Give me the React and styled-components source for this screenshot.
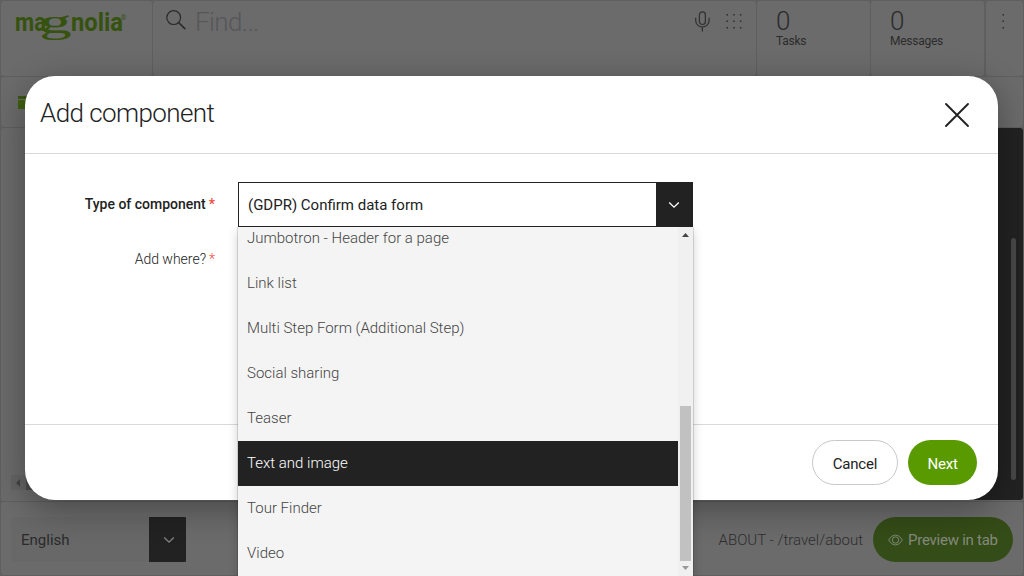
import React from 'react';
import styled, { createGlobalStyle, css } from 'styled-components';

const GlobalStyle = createGlobalStyle`
  *, *::before, *::after { box-sizing: border-box; }
  html, body { margin: 0; padding: 0; overflow: hidden; }
  body { font-family: Roboto, "Liberation Sans", sans-serif; color: #222; background: #5f5f5f; }
  button { font: inherit; margin: 0; padding: 0; border: 0; background: none; color: inherit; }
`;

const Page = styled.div`
  position: relative;
  width: 1024px;
  height: 576px;
  overflow: hidden;
  background: #5f5f5f;
`;

const Shell = styled.div`
  display: flex;
  flex-direction: column;
  gap: 1px;
  height: 100%;
  padding: 1px;
`;

const tile = css`
  background: #6b6b6b;
  border-radius: 3px;
`;

const TopBar = styled.header`
  display: flex;
  gap: 1px;
  height: 75px;
`;

const LogoTile = styled.div`
  ${tile}
  width: 151px;
  padding: 9px 0 0 14px;
  svg { display: block; overflow: visible; }
`;

const SearchTile = styled.div`
  ${tile}
  flex: 1;
  display: flex;
  align-items: flex-start;
  padding: 8px 9px 0 13px;
`;

const SearchText = styled.span`
  flex: 1;
  margin: -2px 0 0 8px;
  font-size: 26px;
  line-height: 30px;
  font-weight: 300;
  letter-spacing: -0.6px;
  color: #555759;
`;

const SearchTools = styled.div`
  display: flex;
  gap: 15px;
  padding-top: 2px;
  svg + svg { margin-top: 2px; }
`;

const CounterTile = styled.div`
  ${tile}
  width: 113px;
  padding: 6px 0 0 19px;
`;

const CounterValue = styled.div`
  font-size: 26px;
  line-height: 28px;
  font-weight: 300;
  color: #2b2b2b;
`;

const CounterLabel = styled.div`
  margin-top: -1px;
  font-size: 12px;
  line-height: 14px;
  color: #2b2b2b;
  letter-spacing: -0.25px;
`;

const MenuTile = styled.div`
  ${tile}
  width: 37px;
  margin-left: 1px;
  padding: 12px 0 0 16px;
`;

const AppBar = styled.div`
  ${tile}
  height: 50px;
  padding: 19px 0 0 17px;
`;

const AppMark = styled.div`
  width: 14px;
  height: 13px;
  background: linear-gradient(#3b5511 0 3px, #6b6b6b 3px 4px, #3f6110 4px);
`;

const Workspace = styled.main`
  ${tile}
  display: flex;
  justify-content: space-between;
  height: 373px;
`;

const PageScroller = styled.div`
  align-self: flex-end;
  display: flex;
  align-items: center;
  width: 400px;
  height: 15px;
  margin: 0 0 11px 10px;
  padding-left: 5px;
  background: linear-gradient(90deg, #646464 15px, #4c4c4c 15px);
`;

const SidePanel = styled.aside`
  display: flex;
  justify-content: flex-end;
  align-items: flex-end;
  width: 80px;
  height: 372px;
  padding: 0 7px 20px 0;
  background: #222;
  border-radius: 3px;
`;

const SideThumb = styled.div`
  width: 5px;
  height: 242px;
  border-radius: 3px;
  background: #484848;
`;

const StatusBar = styled.footer`
  ${tile}
  display: flex;
  align-items: flex-start;
  flex: 1;
  padding: 15px 10px 0;
`;

const LanguageSelect = styled.div`
  display: flex;
  width: 175px;
  height: 45px;
  background: #686868;
`;

const LanguageName = styled.span`
  flex: 1;
  padding-left: 10px;
  font-size: 15px;
  line-height: 46px;
  color: #2b2b2b;
`;

const LanguageArrow = styled.span`
  display: flex;
  align-items: center;
  justify-content: center;
  width: 37px;
  padding: 1px 0 0 3px;
  background: #222;
  border-radius: 0 1px 1px 0;
`;

const PagePath = styled.span`
  margin: 0 10px 0 auto;
  font-size: 15px;
  line-height: 46px;
  font-weight: 300;
  color: #2e2e2e;
`;

const PreviewButton = styled.button`
  display: flex;
  align-items: center;
  gap: 5px;
  width: 140px;
  height: 45px;
  padding-left: 15px;
  border-radius: 23px;
  background: #344c17;
  font-size: 15px;
  letter-spacing: -0.25px;
  color: #848a7d;
  white-space: nowrap;
`;

const Dialog = styled.section`
  position: absolute;
  left: 25px;
  top: 76px;
  display: flex;
  flex-direction: column;
  width: 973px;
  height: 424px;
  border-radius: 30px;
  background: #fff;
  box-shadow: 0 9px 34px rgba(0, 0, 0, 0.33);
`;

const DialogHeader = styled.div`
  display: flex;
  justify-content: space-between;
  height: 78px;
  padding: 21px 28px 0 15px;
  border-bottom: 1px solid #d9d9d9;
`;

const DialogTitle = styled.h1`
  margin: 0;
  font-size: 26px;
  line-height: 32px;
  font-weight: 300;
  letter-spacing: -0.58px;
`;

const CloseButton = styled.button`
  width: 26px;
  height: 26px;
  margin-top: 5px;
  svg { display: block; }
`;

const DialogBody = styled.div`
  display: flex;
  flex-direction: column;
  gap: 10px;
  height: 270px;
  padding-top: 28px;
`;

const FieldRow = styled.div`
  display: flex;
  gap: 23px;
  height: 45px;
`;

const FieldLabel = styled.label`
  width: 190px;
  font-size: 14px;
  line-height: 44px;
  font-weight: ${(p) => (p.$active ? 500 : 300)};
  text-align: right;
`;

const Required = styled.span`
  margin-left: 3px;
  font-weight: inherit;
  color: #f0483e;
`;

const Select = styled.div`
  position: relative;
  display: flex;
  width: 455px;
  height: 45px;
  border: 1px solid #222;
`;

const SelectValue = styled.span`
  flex: 1;
  padding-left: 9px;
  font-size: 15px;
  line-height: 44px;
`;

const SelectArrow = styled.span`
  display: flex;
  align-items: center;
  justify-content: center;
  width: 36px;
  padding-top: 1px;
  background: #222;
`;

const Menu = styled.div`
  position: absolute;
  top: 44px;
  left: -1px;
  display: flex;
  width: 455px;
  height: 352px;
  background: #f4f4f4;
  box-shadow: 0 0 0 1px rgba(0, 0, 0, 0.12), 0 4px 10px rgba(0, 0, 0, 0.2);
  clip-path: inset(0 -20px -20px -20px);
`;

const MenuItems = styled.div`
  flex: 1;
  height: 349px;
  overflow: hidden;
`;

const MenuItem = styled.div`
  height: 45px;
  padding-left: 9px;
  font-size: 15px;
  line-height: 44px;
  font-weight: 300;
  color: ${(p) => (p.$selected ? '#fff' : '#444')};
  background: ${(p) => (p.$selected ? '#222' : 'transparent')};
  &:first-child { margin-top: -11px; }
`;

const MenuScroll = styled.div`
  display: flex;
  flex-direction: column;
  align-items: center;
  justify-content: space-between;
  width: 15px;
  height: 349px;
  padding: 6px 0 6px;
  background: #f0f0f0;
  svg { display: block; flex: none; }
`;

const MenuThumb = styled.div`
  width: 11px;
  height: 155px;
  margin: auto 0 5px;
  background: #c1c1c1;
`;

const DialogFooter = styled.div`
  display: flex;
  justify-content: flex-end;
  gap: 10px;
  flex: 1;
  padding: 15px 21px 0;
  border-top: 1px solid #d9d9d9;
`;

const ActionButton = styled.button`
  height: 45px;
  width: ${(p) => (p.$primary ? '69px' : '86px')};
  padding-top: 2px;
  border: ${(p) => (p.$primary ? '0' : '1px solid #c8c8c8')};
  border-radius: 23px;
  background: ${(p) => (p.$primary ? '#589a00' : '#fff')};
  color: ${(p) => (p.$primary ? '#fff' : '#222')};
  font-size: 15px;
  letter-spacing: -0.2px;
`;

const Logo = () => (
  <svg width="116" height="42" fill="#35520e" fontFamily="Roboto, sans-serif" fontWeight="700">
    <text x="0" y="21" fontSize="26" textLength="31" lengthAdjust="spacingAndGlyphs">ma</text>
    <text
      transform="translate(24.5 22.8) scale(1.88 1)"
      fontSize="34"
      fontWeight="400"
      fontFamily="Liberation Serif, serif"
      stroke="#35520e"
      strokeWidth="0.2"
    >g</text>
    <text x="56" y="21" fontSize="25.5" textLength="52" lengthAdjust="spacingAndGlyphs">nolia</text>
    <text x="106" y="10" fontSize="6.5" fontWeight="500">®</text>
  </svg>
);

const SearchIcon = () => (
  <svg width="21" height="21" fill="none" stroke="#2b2b2b" strokeWidth="1.2">
    <circle cx="7.7" cy="8.6" r="6.9" />
    <path d="M12.7 13.6L19.3 20.1" strokeWidth="1.6" />
  </svg>
);

const MicIcon = () => (
  <svg width="16" height="21" fill="none" stroke="#2f2f2f" strokeWidth="1.2">
    <rect x="4.4" y="0.9" width="6" height="12.6" rx="3" />
    <path d="M.7 6.8V9.6a6.7 6.4 0 0 0 13.4 0V6.8M7.4 16.1V20.5" />
  </svg>
);

const Dots = ({ columns }) => (
  <svg width={columns * 7} height="18" fill="#2e2e2e">
    {Array.from({ length: columns * 3 }, (_, i) => (
      <rect key={i} x={(i % columns) * 6.7 + 0.5} y={Math.floor(i / columns) * 6.5 + 1} width="1.5" height="1.5" />
    ))}
  </svg>
);

const Chevron = ({ color }) => (
  <svg width="12" height="8" fill="none" stroke={color} strokeWidth="1.3">
    <path d="M1.2 1.5L6 6.1L10.8 1.5" />
  </svg>
);

const EyeIcon = () => (
  <svg width="15" height="12" fill="none" stroke="#7d8775" strokeWidth="1">
    <path d="M.6 6Q3.2 1 7.5 1T14.4 6Q11.8 11 7.5 11T.6 6Z" />
    <circle cx="7.5" cy="6" r="3.2" />
  </svg>
);

const options = [
  'Jumbotron - Header for a page',
  'Link list',
  'Multi Step Form (Additional Step)',
  'Social sharing',
  'Teaser',
  'Text and image',
  'Tour Finder',
  'Video',
];

export default function App() {
  return (
    <Page>
      <GlobalStyle />
      <Shell>
        <TopBar>
          <LogoTile><Logo /></LogoTile>
          <SearchTile>
            <SearchIcon />
            <SearchText>Find...</SearchText>
            <SearchTools>
              <MicIcon />
              <Dots columns={3} />
            </SearchTools>
          </SearchTile>
          <CounterTile>
            <CounterValue>0</CounterValue>
            <CounterLabel>Tasks</CounterLabel>
          </CounterTile>
          <CounterTile>
            <CounterValue>0</CounterValue>
            <CounterLabel>Messages</CounterLabel>
          </CounterTile>
          <MenuTile><Dots columns={1} /></MenuTile>
        </TopBar>
        <AppBar><AppMark /></AppBar>
        <Workspace>
          <PageScroller>
            <svg width="4" height="8" fill="#444"><path d="M0 4L4 0V8Z" /></svg>
          </PageScroller>
          <SidePanel><SideThumb /></SidePanel>
        </Workspace>
        <StatusBar>
          <LanguageSelect>
            <LanguageName>English</LanguageName>
            <LanguageArrow><Chevron color="#858585" /></LanguageArrow>
          </LanguageSelect>
          <PagePath>ABOUT - /travel/about</PagePath>
          <PreviewButton><EyeIcon />Preview in tab</PreviewButton>
        </StatusBar>
      </Shell>
      <Dialog>
        <DialogHeader>
          <DialogTitle>Add component</DialogTitle>
          <CloseButton aria-label="Close">
            <svg width="26" height="26" stroke="#222" strokeWidth="1.9">
              <path d="M2 2L24 24M24 2L2 24" strokeLinecap="round" />
            </svg>
          </CloseButton>
        </DialogHeader>
        <DialogBody>
          <FieldRow>
            <FieldLabel $active>Type of component<Required>*</Required></FieldLabel>
            <Select>
              <SelectValue>(GDPR) Confirm data form</SelectValue>
              <SelectArrow><Chevron color="#fff" /></SelectArrow>
              <Menu>
                <MenuItems>
                  {options.map((name) => (
                    <MenuItem key={name} $selected={name === 'Text and image'}>{name}</MenuItem>
                  ))}
                </MenuItems>
                <MenuScroll>
                  <svg width="7" height="4" fill="#444"><path d="M0 4L3.5 0L7 4Z" /></svg>
                  <MenuThumb />
                  <svg width="7" height="4" fill="#999"><path d="M0 0L3.5 4L7 0Z" /></svg>
                </MenuScroll>
              </Menu>
            </Select>
          </FieldRow>
          <FieldRow>
            <FieldLabel>Add where?<Required>*</Required></FieldLabel>
          </FieldRow>
        </DialogBody>
        <DialogFooter>
          <ActionButton>Cancel</ActionButton>
          <ActionButton $primary>Next</ActionButton>
        </DialogFooter>
      </Dialog>
    </Page>
  );
}
